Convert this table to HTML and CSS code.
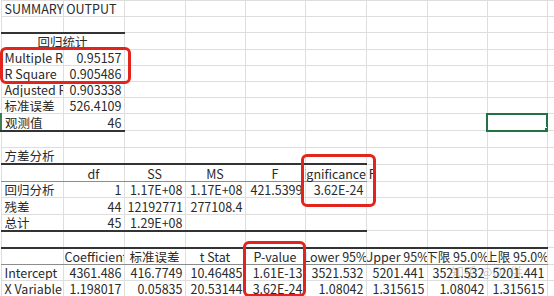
FILE: index.html
```html
<!DOCTYPE html>
<html lang="zh-CN">
<head>
<meta charset="utf-8">
<title>SUMMARY OUTPUT</title>
<link rel="stylesheet" href="styles.css">
</head>
<body>
<div class="sheet-wrap">
<table class="sheet">
<colgroup>
<col class="w62"><col class="w61"><col class="w61"><col class="w60"><col class="w60"><col class="w61"><col class="w61"><col class="w60"><col class="w60"><col class="w60">
</colgroup>
<tbody>
<tr class="h15"><td class="t ov">SUMMARY OUTPUT</td><td></td><td></td><td></td><td></td><td></td><td></td><td></td><td></td><td></td></tr>
<tr class="h16"><td></td><td></td><td></td><td></td><td></td><td></td><td></td><td></td><td></td><td></td></tr>
<tr class="h17"><td colspan="2" class="h bt bh"><div class="ctr">回归统计</div></td><td></td><td></td><td></td><td></td><td></td><td></td><td></td><td></td></tr>
<tr class="h16"><td class="t">Multiple R</td><td class="n">0.95157</td><td></td><td></td><td></td><td></td><td></td><td></td><td></td><td></td></tr>
<tr class="h16"><td class="t">R Square</td><td class="n">0.905486</td><td></td><td></td><td></td><td></td><td></td><td></td><td></td><td></td></tr>
<tr class="h16"><td class="t">Adjusted R Square</td><td class="n">0.903338</td><td></td><td></td><td></td><td></td><td></td><td></td><td></td><td></td></tr>
<tr class="h16"><td class="t">标准误差</td><td class="n">526.4109</td><td></td><td></td><td></td><td></td><td></td><td></td><td></td><td></td></tr>
<tr class="h17"><td class="t bb rowsel">观测值</td><td class="n bb">46</td><td></td><td></td><td></td><td></td><td></td><td></td><td class="sel"></td><td></td></tr>
<tr class="h17"><td></td><td></td><td></td><td></td><td></td><td></td><td></td><td></td><td></td><td></td></tr>
<tr class="h16"><td class="t ov">方差分析</td><td></td><td></td><td></td><td></td><td></td><td></td><td></td><td></td><td></td></tr>
<tr class="h17"><td class="bt bh"></td><td class="h bt bh"><div class="ctr">df</div></td><td class="h bt bh"><div class="ctr">SS</div></td><td class="h bt bh"><div class="ctr">MS</div></td><td class="h bt bh"><div class="ctr">F</div></td><td class="h bt bh spill"><div class="ctr">Significance F</div></td><td></td><td></td><td></td><td></td></tr>
<tr class="h16"><td class="t">回归分析</td><td class="n">1</td><td class="n">1.17E+08</td><td class="n">1.17E+08</td><td class="n">421.5399</td><td class="n">3.62E-24</td><td></td><td></td><td></td><td></td></tr>
<tr class="h17"><td class="t">残差</td><td class="n">44</td><td class="n">12192771</td><td class="n">277108.4</td><td></td><td></td><td></td><td></td><td></td><td></td></tr>
<tr class="h16"><td class="t bb">总计</td><td class="n bb">45</td><td class="n bb">1.29E+08</td><td class="bb"></td><td class="bb"></td><td class="bb"></td><td></td><td></td><td></td><td></td></tr>
<tr class="h17"><td></td><td></td><td></td><td></td><td></td><td></td><td></td><td></td><td></td><td></td></tr>
<tr class="h16"><td class="bt bh"></td><td class="h bt bh"><div class="ctr start">Coefficients</div></td><td class="h bt bh"><div class="ctr">标准误差</div></td><td class="h bt bh"><div class="ctr">t Stat</div></td><td class="h bt bh"><div class="ctr">P-value</div></td><td class="h bt bh"><div class="ctr">Lower 95%</div></td><td class="h bt bh"><div class="ctr">Upper 95%</div></td><td class="h bt bh"><div class="ctr">下限 95.0%</div></td><td class="h bt bh"><div class="ctr">上限 95.0%</div></td><td></td></tr>
<tr class="h15"><td class="t">Intercept</td><td class="n">4361.486</td><td class="n">416.7749</td><td class="n">10.46485</td><td class="n">1.61E-13</td><td class="n">3521.532</td><td class="n">5201.441</td><td class="n">3521.532</td><td class="n">5201.441</td><td></td></tr>
<tr class="h16"><td class="t bb">X Variable 1</td><td class="n bb">1.198017</td><td class="n bb">0.05835</td><td class="n bb">20.53144</td><td class="n bb">3.62E-24</td><td class="n bb">1.08042</td><td class="n bb">1.315615</td><td class="n bb">1.08042</td><td class="n bb">1.315615</td><td></td></tr>
<tr class="h16"><td></td><td></td><td></td><td></td><td></td><td></td><td></td><td></td><td></td><td></td></tr>
</tbody>
</table>
<div class="mark mark-1"></div>
<div class="mark mark-2"></div>
<div class="mark mark-3"></div>
<div class="watermark">知乎 @OI.併</div>
</div>
</body>
</html>
```
FILE: styles.css
```css
html, body {
  margin: 0;
  padding: 0;
  background: #ffffff;
  overflow: hidden;
}

.sheet-wrap {
  position: relative;
  width: 554px;
  height: 296px;
  overflow: hidden;
}

.sheet {
  border-collapse: collapse;
  table-layout: fixed;
  width: 606px;
  font-family: "Noto Sans CJK SC", "Noto Sans", sans-serif;
  font-size: 12.5px;
  color: #2a2a2a;
}

.w62 { width: 62px; }
.w61 { width: 61px; }
.w60 { width: 60px; }

.h15 { height: 15px; }
.h16 { height: 16px; }
.h17 { height: 17px; }

.sheet td {
  border: 1px solid #dedede;
  padding: 0 2px 0 3px;
  line-height: 15px;
  vertical-align: bottom;
  white-space: nowrap;
  overflow: hidden;
}

.sheet td.t { text-align: left; }
.sheet td.ov { overflow: visible; }
.sheet td.n { text-align: right; }

.sheet td.h {
  padding: 0;
}

.ctr {
  display: flex;
  justify-content: center;
  white-space: nowrap;
}

.ctr.start {
  justify-content: flex-start;
  padding-left: 1px;
}

.sheet td.spill { overflow: visible; }
.spill .ctr { clip-path: inset(-4px -30px -4px 0); }

.sheet td.bt { border-top: 2px solid #333333; }
.sheet td.bb { border-bottom: 2px solid #333333; }
.sheet td.bh { border-bottom: 1px solid #8c8c8c; }

.sheet td.rowsel { border-left: 2px solid #3f7d5a; }

.sheet td.sel {
  position: relative;
  outline: 2px solid #217346;
  outline-offset: -1px;
}

.sheet td.sel::after {
  content: "";
  position: absolute;
  right: -4px;
  bottom: -4px;
  width: 5px;
  height: 5px;
  background: #217346;
  border: 1px solid #ffffff;
}

.mark {
  position: absolute;
  border: 3px solid #e3241c;
  border-radius: 6px;
  box-sizing: border-box;
}

.mark-1 { left: 0; top: 47px; width: 131px; height: 37px; }
.mark-2 { left: 301px; top: 154px; width: 75px; height: 53px; }
.mark-3 { left: 243px; top: 241px; width: 63px; height: 56px; }

.watermark {
  position: absolute;
  left: 451px;
  top: 262px;
  font-family: "Noto Sans CJK SC", sans-serif;
  font-size: 13px;
  color: rgba(120, 120, 120, 0.4);
  white-space: nowrap;
}
```
